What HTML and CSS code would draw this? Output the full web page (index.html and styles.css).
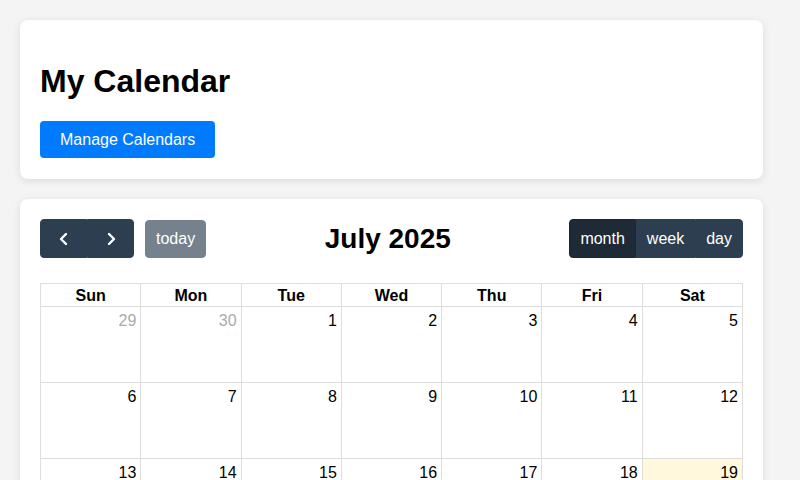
FILE: index.html
```html
<!DOCTYPE html>
<html lang="en">
<head>
<meta charset="utf-8">
<title>My Calendar</title>
<link rel="stylesheet" href="styles.css">
</head>
<body>
<div class="page">
  <section class="card header-card">
    <h1 class="page-title">My Calendar</h1>
    <button class="btn-primary" type="button">Manage Calendars</button>
  </section>
  <section class="card calendar-card">
    <div class="toolbar">
      <div class="chunk">
        <div class="btn-group">
          <button class="fc-btn icon-btn" type="button" aria-label="prev">
            <svg width="24" height="24" viewBox="0 0 24 24"><polyline points="14,7 9,12 14,17" fill="none" stroke="#fff" stroke-width="2.4" stroke-linecap="round" stroke-linejoin="round"/></svg>
          </button>
          <button class="fc-btn icon-btn" type="button" aria-label="next">
            <svg width="24" height="24" viewBox="0 0 24 24"><polyline points="10,7 15,12 10,17" fill="none" stroke="#fff" stroke-width="2.4" stroke-linecap="round" stroke-linejoin="round"/></svg>
          </button>
        </div>
        <button class="fc-btn today-btn" type="button">today</button>
      </div>
      <h2 class="cal-title">July 2025</h2>
      <div class="chunk">
        <div class="btn-group">
          <button class="fc-btn active" type="button">month</button>
          <button class="fc-btn" type="button">week</button>
          <button class="fc-btn" type="button">day</button>
        </div>
      </div>
    </div>
    <table class="month-grid">
      <thead>
        <tr><th>Sun</th><th>Mon</th><th>Tue</th><th>Wed</th><th>Thu</th><th>Fri</th><th>Sat</th></tr>
      </thead>
      <tbody>
        <tr><td class="other">29</td><td class="other">30</td><td>1</td><td>2</td><td>3</td><td>4</td><td>5</td></tr>
        <tr><td>6</td><td>7</td><td>8</td><td>9</td><td>10</td><td>11</td><td>12</td></tr>
        <tr><td>13</td><td>14</td><td>15</td><td>16</td><td>17</td><td>18</td><td class="today">19</td></tr>
        <tr><td>20</td><td>21</td><td>22</td><td>23</td><td>24</td><td>25</td><td>26</td></tr>
        <tr><td>27</td><td>28</td><td>29</td><td>30</td><td>31</td><td class="other">1</td><td class="other">2</td></tr>
      </tbody>
    </table>
  </section>
</div>
</body>
</html>
```
FILE: styles.css
```css
* { box-sizing: border-box; }
html, body {
  margin: 0;
  padding: 0;
  background: #f4f4f4;
  font-family: "Liberation Sans", Arial, sans-serif;
  color: #000;
}
.page {
  padding: 20px;
  display: flex;
  flex-direction: column;
  gap: 20px;
}
.card {
  width: 743px;
  background: #fff;
  border-radius: 8px;
  box-shadow: 0 2px 8px rgba(0, 0, 0, 0.1);
  padding: 20px;
}
.header-card { padding-bottom: 21px; }
.page-title {
  font-size: 32px;
  font-weight: bold;
  margin: 23px 0 21px;
  line-height: 37px;
}
.btn-primary {
  background: #007bff;
  color: #fff;
  border: none;
  border-radius: 4px;
  font-family: inherit;
  font-size: 16px;
  padding: 0 20px;
  height: 37px;
  cursor: pointer;
}
.toolbar {
  display: flex;
  justify-content: space-between;
  align-items: center;
  margin-bottom: 25px;
}
.chunk {
  display: flex;
  align-items: center;
}
.btn-group {
  display: flex;
}
.fc-btn {
  background: #2c3e50;
  border: 1px solid #2c3e50;
  color: #fff;
  font-family: inherit;
  font-size: 16px;
  line-height: 1.5;
  padding: 6.5px 10px 6.5px;
  border-radius: 0;
  margin: 0;
}
.fc-btn.active {
  background: #1e2b37;
  border-color: #1a252f;
}
.btn-group .fc-btn:first-child { border-radius: 4px 0 0 4px; }
.btn-group .fc-btn:last-child { border-radius: 0 4px 4px 0; }
.icon-btn {
  display: flex;
  align-items: center;
  justify-content: center;
  padding: 6.5px 10.5px;
}
.icon-btn svg { display: block; }
.today-btn {
  margin-left: 11px;
  border-radius: 4px;
  opacity: 0.65;
  padding: 6px 10px;
}
.cal-title {
  margin: 0;
  font-size: 28px;
  font-weight: bold;
  line-height: 1.2;
}
.month-grid {
  width: 703px;
  border-collapse: collapse;
  table-layout: fixed;
  font-size: 16px;
}
.month-grid th, .month-grid td {
  border: 1px solid #ddd;
}
.month-grid th {
  font-weight: bold;
  padding: 3px 4px 1px;
  height: 23px;
  line-height: 18px;
  text-align: center;
}
.month-grid td {
  height: 76px;
  vertical-align: top;
  text-align: right;
  padding: 5px 4px 4px;
  line-height: 18px;
}
.month-grid td.other { color: #aaa; }
.month-grid td.today { background: #fff8dc; }
```
